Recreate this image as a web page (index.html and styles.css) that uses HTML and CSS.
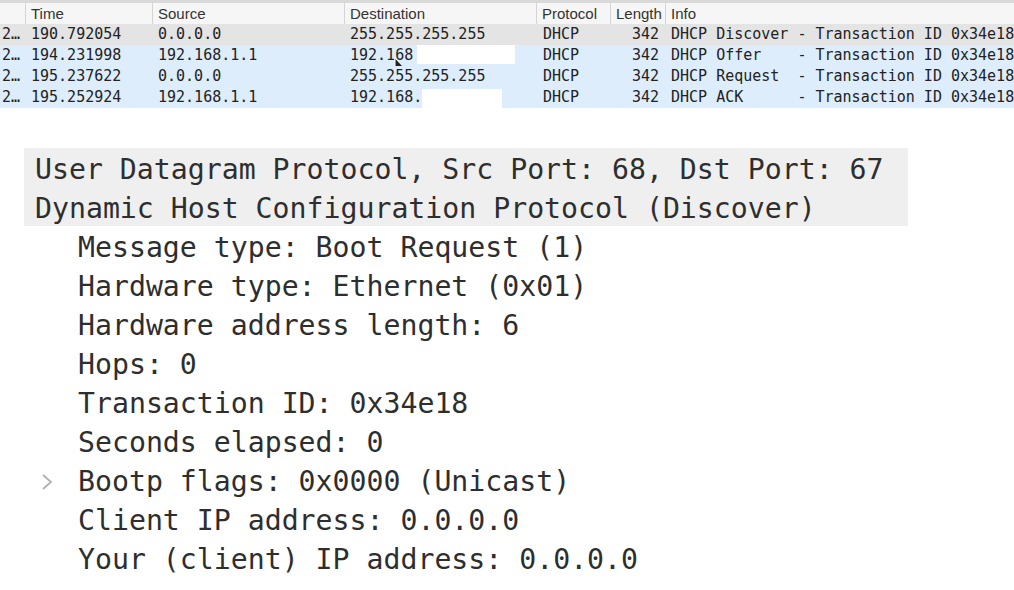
FILE: index.html
```html
<!DOCTYPE html>
<html>
<head>
<meta charset="utf-8">
<link rel="stylesheet" href="styles.css">
</head>
<body>
<div class="list">
  <div class="row head">
    <div class="c c0"></div>
    <div class="c c1">Time</div>
    <div class="c c2">Source</div>
    <div class="c c3">Destination</div>
    <div class="c c4">Protocol</div>
    <div class="c c5">Length</div>
    <div class="c c6">Info</div>
  </div>
  <div class="row data sel">
    <div class="c c0">2…</div>
    <div class="c c1">190.792054</div>
    <div class="c c2">0.0.0.0</div>
    <div class="c c3">255.255.255.255</div>
    <div class="c c4">DHCP</div>
    <div class="c c5 num">342</div>
    <div class="c c6">DHCP Discover - Transaction ID 0x34e18</div>
  </div>
  <div class="row data blue">
    <div class="c c0">2…</div>
    <div class="c c1">194.231998</div>
    <div class="c c2">192.168.1.1</div>
    <div class="c c3">192.168<span class="redact r1"></span><svg class="cursor" width="12" height="18" viewBox="0 0 12 18"><path d="M1 1 L1 14 L4 11 L6.5 16.5 L8.5 15.5 L6 10.5 L10 10.5 Z" fill="#222" stroke="#fff" stroke-width="1"/></svg></div>
    <div class="c c4">DHCP</div>
    <div class="c c5 num">342</div>
    <div class="c c6">DHCP Offer    - Transaction ID 0x34e18</div>
  </div>
  <div class="row data blue">
    <div class="c c0">2…</div>
    <div class="c c1">195.237622</div>
    <div class="c c2">0.0.0.0</div>
    <div class="c c3">255.255.255.255</div>
    <div class="c c4">DHCP</div>
    <div class="c c5 num">342</div>
    <div class="c c6">DHCP Request  - Transaction ID 0x34e18</div>
  </div>
  <div class="row data blue">
    <div class="c c0">2…</div>
    <div class="c c1">195.252924</div>
    <div class="c c2">192.168.1.1</div>
    <div class="c c3">192.168.<span class="redact r2"></span></div>
    <div class="c c4">DHCP</div>
    <div class="c c5 num">342</div>
    <div class="c c6">DHCP ACK      - Transaction ID 0x34e18</div>
  </div>
</div>

<div class="tree">
  <div class="parents">
    <div class="line">User Datagram Protocol, Src Port: 68, Dst Port: 67</div>
    <div class="line">Dynamic Host Configuration Protocol (Discover)</div>
  </div>
  <div class="line child">Message type: Boot Request (1)</div>
  <div class="line child">Hardware type: Ethernet (0x01)</div>
  <div class="line child">Hardware address length: 6</div>
  <div class="line child">Hops: 0</div>
  <div class="line child">Transaction ID: 0x34e18</div>
  <div class="line child">Seconds elapsed: 0</div>
  <div class="line child"><svg class="chev" width="12" height="18" viewBox="0 0 12 18"><polyline points="2,2 10,9 2,16" fill="none" stroke="#b0b0b0" stroke-width="1.8"/></svg>Bootp flags: 0x0000 (Unicast)</div>
  <div class="line child">Client IP address: 0.0.0.0</div>
  <div class="line child">Your (client) IP address: 0.0.0.0</div>
</div>
</body>
</html>
```

FILE: styles.css
```css
html, body {
  margin: 0;
  padding: 0;
  background: #ffffff;
  width: 1014px;
  height: 590px;
  overflow: hidden;
}

.list {
  border-top: 3px solid #d9d9d9;
}

.row {
  display: grid;
  grid-template-columns: 25px 127px 192px 192px 74px 55px 1fr;
  overflow: hidden;
}

.c {
  overflow: hidden;
  position: relative;
  white-space: pre;
}

.head {
  height: 21px;
  background: #f6f6f6;
  font-family: "Liberation Sans", Arial, sans-serif;
  font-size: 15px;
  line-height: 21px;
  color: #333333;
}

.head .c {
  border-left: 1px solid #d4d4d4;
  padding-left: 5px;
}

.head .c0 {
  border-left: none;
}

.data {
  height: 21px;
  font-family: "DejaVu Sans Mono", monospace;
  font-size: 15px;
  line-height: 21px;
  color: #222222;
}

.data .c {
  padding-left: 6px;
}

.data .c0 {
  padding-left: 2px;
}

.data .c4 {
  padding-left: 7px;
}

.data .num {
  text-align: right;
  padding-right: 6px;
  padding-left: 0;
}

.sel {
  background: #e4e4e4;
}

.blue {
  background: #deedfc;
}

.redact {
  position: absolute;
  background: #ffffff;
}

.r1 {
  left: 73px;
  top: 0;
  width: 98px;
  height: 19px;
}

.r2 {
  left: 78px;
  top: 2px;
  width: 80px;
  height: 19px;
}

.cursor {
  position: absolute;
  left: 50px;
  top: 12px;
}

.tree {
  margin-top: 40px;
  font-family: "DejaVu Sans Mono", monospace;
  font-size: 28.2px;
  line-height: 39px;
  color: #2e2e2e;
}

.line {
  white-space: pre;
  height: 39px;
  padding-top: 2px;
  box-sizing: border-box;
}

.parents {
  margin-left: 24px;
  width: 884px;
  background: #efefef;
}

.parents .line {
  padding-left: 11px;
}

.child {
  padding-left: 78px;
  position: relative;
}

.chev {
  position: absolute;
  left: 41px;
  top: 13px;
}
```
